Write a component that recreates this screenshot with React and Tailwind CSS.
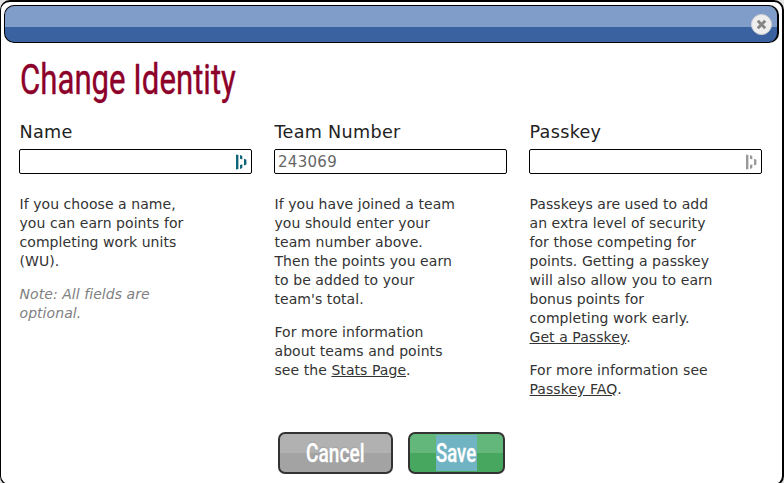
import React from 'react';

function KeyIcon({ className }) {
  return (
    <svg className={className} width="12" height="16" viewBox="0 0 12 16" fill="currentColor">
      <path d="M1 .6 3.4 1V15L1 15.4Z" />
      <path d="M5 1 7.3 2V5.6L5 4.8ZM5 11 7.3 10.2V14L5 15Z" />
      <path d="M9 4.8 11.4 5.8V10.6L9 11.6Z" />
    </svg>
  );
}

function Column({ label, value, icon, children }) {
  return (
    <section className="w-[233px] shrink-0">
      <h2 className="h-[27px] whitespace-nowrap pl-[0.5px] text-[17.6px] leading-[20px] tracking-[0.3px] text-[#222]">{label}</h2>
      <div className="flex h-[25px] items-center justify-between rounded-[2px] border border-black bg-white pl-[3px] pr-1">
        <span className="pt-px text-[15px] leading-[22px] tracking-[0.3px] text-[#666]">{value}</span>
        {icon}
      </div>
      <div className="mt-[21px] flex flex-col gap-[14px] whitespace-nowrap pl-[0.5px] text-[14px] leading-[19px] tracking-[0.06px] text-[#333]">{children}</div>
    </section>
  );
}

export default function App() {
  return (
    <div className="h-[483px] w-[784px] overflow-hidden bg-[#e4e4e4] [font-family:Verdana,'DejaVu_Sans',sans-serif]">
      <div className="h-[486px] rounded-[10px] border-2 border-l-[1px] border-black bg-white pl-[3px] pr-[3px] pt-[3px]">
        <header className="flex h-[38px] items-center justify-end rounded-[10px] border border-r-2 border-black bg-[linear-gradient(#809dc9_0_21px,#3a62a1_21px)] pr-[5px]">
          <button className="flex size-[21px] items-center justify-center rounded-full border border-[#d5d5d5] bg-[#eeeeee]">
            <svg width="11" height="11" viewBox="0 0 11 11" stroke="#858585" strokeWidth="3">
              <path d="M1.8 1.8 9.2 9.2M9.2 1.8 1.8 9.2" />
            </svg>
          </button>
        </header>
        <main className="pl-[15px]">
          <h1 className="h-[79px] pl-[0.5px] pt-[12px]">
            <span className="inline-block origin-left scale-x-[0.742] whitespace-nowrap text-[42px] leading-[50px] text-[#8c0029] [-webkit-text-stroke:0.4px_#8c0029] [font-family:Roboto,sans-serif]">Change Identity</span>
          </h1>
          <div className="flex h-[310px] gap-[22px]">
            <Column label="Name" value="" icon={<KeyIcon className="text-[#0e6577]" />}>
              <p>If you choose a name,<br />you can earn points for<br />completing work units<br />(WU).</p>
              <p className="italic text-[#808080]">Note: All fields are<br />optional.</p>
            </Column>
            <Column label="Team Number" value="243069">
              <p>If you have joined a team<br />you should enter your<br />team number above.<br />Then the points you earn<br />to be added to your<br />team's total.</p>
              <p>For more information<br />about teams and points<br />see the <a className="underline">Stats Page</a>.</p>
            </Column>
            <Column label="Passkey" value="" icon={<KeyIcon className="text-[#999]" />}>
              <p>Passkeys are used to add<br />an extra level of security<br />for those competing for<br />points. Getting a passkey<br />will also allow you to earn<br />bonus points for<br />completing work early.<br /><a className="underline">Get a Passkey</a>.</p>
              <p>For more information see<br /><a className="underline">Passkey FAQ</a>.</p>
            </Column>
          </div>
          <div className="flex gap-[15px] pl-[259px] text-white [font-family:Roboto,sans-serif]">
            <button className="flex h-[42px] w-[115px] items-center justify-center rounded-[7px] border-2 border-[#333] bg-[linear-gradient(#b1b1b1_0_19px,#a3a3a3_19px)]">
              <span className="flex h-9 w-[58px] items-center justify-center pt-[2px]">
                <span className="scale-x-[0.765] text-[25px] font-medium leading-9 [-webkit-text-stroke:0.3px_white] [text-shadow:0_-1px_1px_#999]">Cancel</span>
              </span>
            </button>
            <button className="flex h-[42px] w-[97px] items-center justify-center rounded-[7px] border-2 border-[#333] bg-[linear-gradient(#63b77a_0_19px,#47a75f_19px)]">
              <span className="flex h-9 w-[41px] items-center justify-center bg-[#70b3c3] pt-[2px]">
                <span className="scale-x-[0.74] text-[25px] font-medium leading-9 [-webkit-text-stroke:0.3px_white]">Save</span>
              </span>
            </button>
          </div>
        </main>
      </div>
    </div>
  );
}
